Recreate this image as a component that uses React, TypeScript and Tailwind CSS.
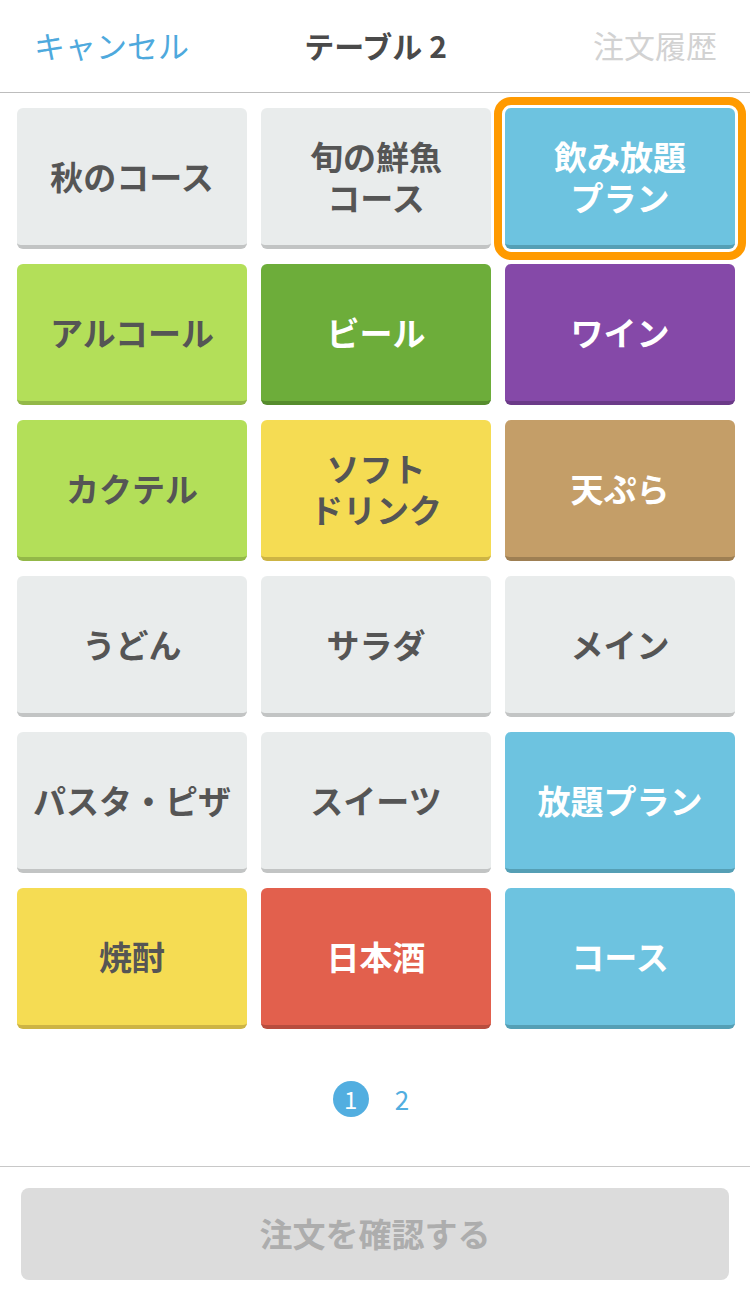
const FONT = { fontFamily: '"Noto Sans CJK JP", "Noto Sans", sans-serif' };

type Tile = { label: string; cls: string; dark?: boolean; selected?: boolean };

const TILES: Tile[] = [
  { label: "秋のコース", cls: "bg-[#e9ecec] border-[#c2c4c4]", dark: true },
  { label: "旬の鮮魚\nコース", cls: "bg-[#e9ecec] border-[#c2c4c4]", dark: true },
  { label: "飲み放題\nプラン", cls: "bg-[#6dc3e0] border-[#559fb5]", selected: true },
  { label: "アルコール", cls: "bg-[#b3df59] border-[#93b848]", dark: true },
  { label: "ビール", cls: "bg-[#6dad3a] border-[#568c2d]" },
  { label: "ワイン", cls: "bg-[#8549a8] border-[#6b3a88]" },
  { label: "カクテル", cls: "bg-[#b3df59] border-[#93b848]", dark: true },
  { label: "ソフト\nドリンク", cls: "bg-[#f5dc53] border-[#cdb444]", dark: true },
  { label: "天ぷら", cls: "bg-[#c49e68] border-[#9e7f53]" },
  { label: "うどん", cls: "bg-[#e9ecec] border-[#c2c4c4]", dark: true },
  { label: "サラダ", cls: "bg-[#e9ecec] border-[#c2c4c4]", dark: true },
  { label: "メイン", cls: "bg-[#e9ecec] border-[#c2c4c4]", dark: true },
  { label: "パスタ・ピザ", cls: "bg-[#e9ecec] border-[#c2c4c4]", dark: true },
  { label: "スイーツ", cls: "bg-[#e9ecec] border-[#c2c4c4]", dark: true },
  { label: "放題プラン", cls: "bg-[#6dc3e0] border-[#559fb5]" },
  { label: "焼酎", cls: "bg-[#f5dc53] border-[#cdb444]", dark: true },
  { label: "日本酒", cls: "bg-[#e2604d] border-[#b84d3e]" },
  { label: "コース", cls: "bg-[#6dc3e0] border-[#559fb5]" },
];

function MenuTile({ tile }: { tile: Tile }) {
  return (
    <button
      className={`h-[141px] rounded-[6px] border-b-[4px] flex items-center justify-center text-center text-[33px] font-bold leading-[41px] whitespace-pre-line ${tile.cls} ${
        tile.dark ? "text-[#555555]" : "text-white"
      } ${tile.selected ? "outline-[8px] outline-solid outline-[#ff9a00] outline-offset-[3px]" : ""}`}
    >
      {tile.label}
    </button>
  );
}

export default function App() {
  return (
    <div className="w-[750px] h-[1298px] bg-white flex flex-col" style={FONT}>
      {/* header */}
      <div className="h-[93px] border-b border-[#bdbdbd] flex items-center justify-between pl-[34px] pr-[33px] pb-[2px]">
        <span className="text-[31px] text-[#4ea9dd] w-[200px]">キャンセル</span>
        <span className="text-[30px] font-bold text-[#4a4a4a]">テーブル 2</span>
        <span className="text-[31px] text-[#d2d2d2] w-[200px] text-right">注文履歴</span>
      </div>

      {/* menu grid */}
      <div className="grid grid-cols-3 gap-x-[14px] gap-y-[15px] pl-[17px] pr-[15px] pt-[15px]">
        {TILES.map((t, i) => (
          <MenuTile key={i} tile={t} />
        ))}
      </div>

      {/* pagination */}
      <div className="flex justify-center gap-[26px] pt-[52px] h-[137px] items-start pr-[8px]">
        <span className="w-[36px] h-[36px] rounded-full bg-[#52aee0] text-white text-[24px] flex items-center justify-center">
          1
        </span>
        <span className="text-[26px] text-[#52aee0] leading-[36px]">2</span>
      </div>

      {/* footer */}
      <div className="border-t border-[#c8c8c8] px-[21px] pt-[21px]">
        <button className="w-full h-[92px] rounded-[8px] bg-[#dcdcdc] text-[#adadad] text-[33px] font-bold">
          注文を確認する
        </button>
      </div>
    </div>
  );
}
